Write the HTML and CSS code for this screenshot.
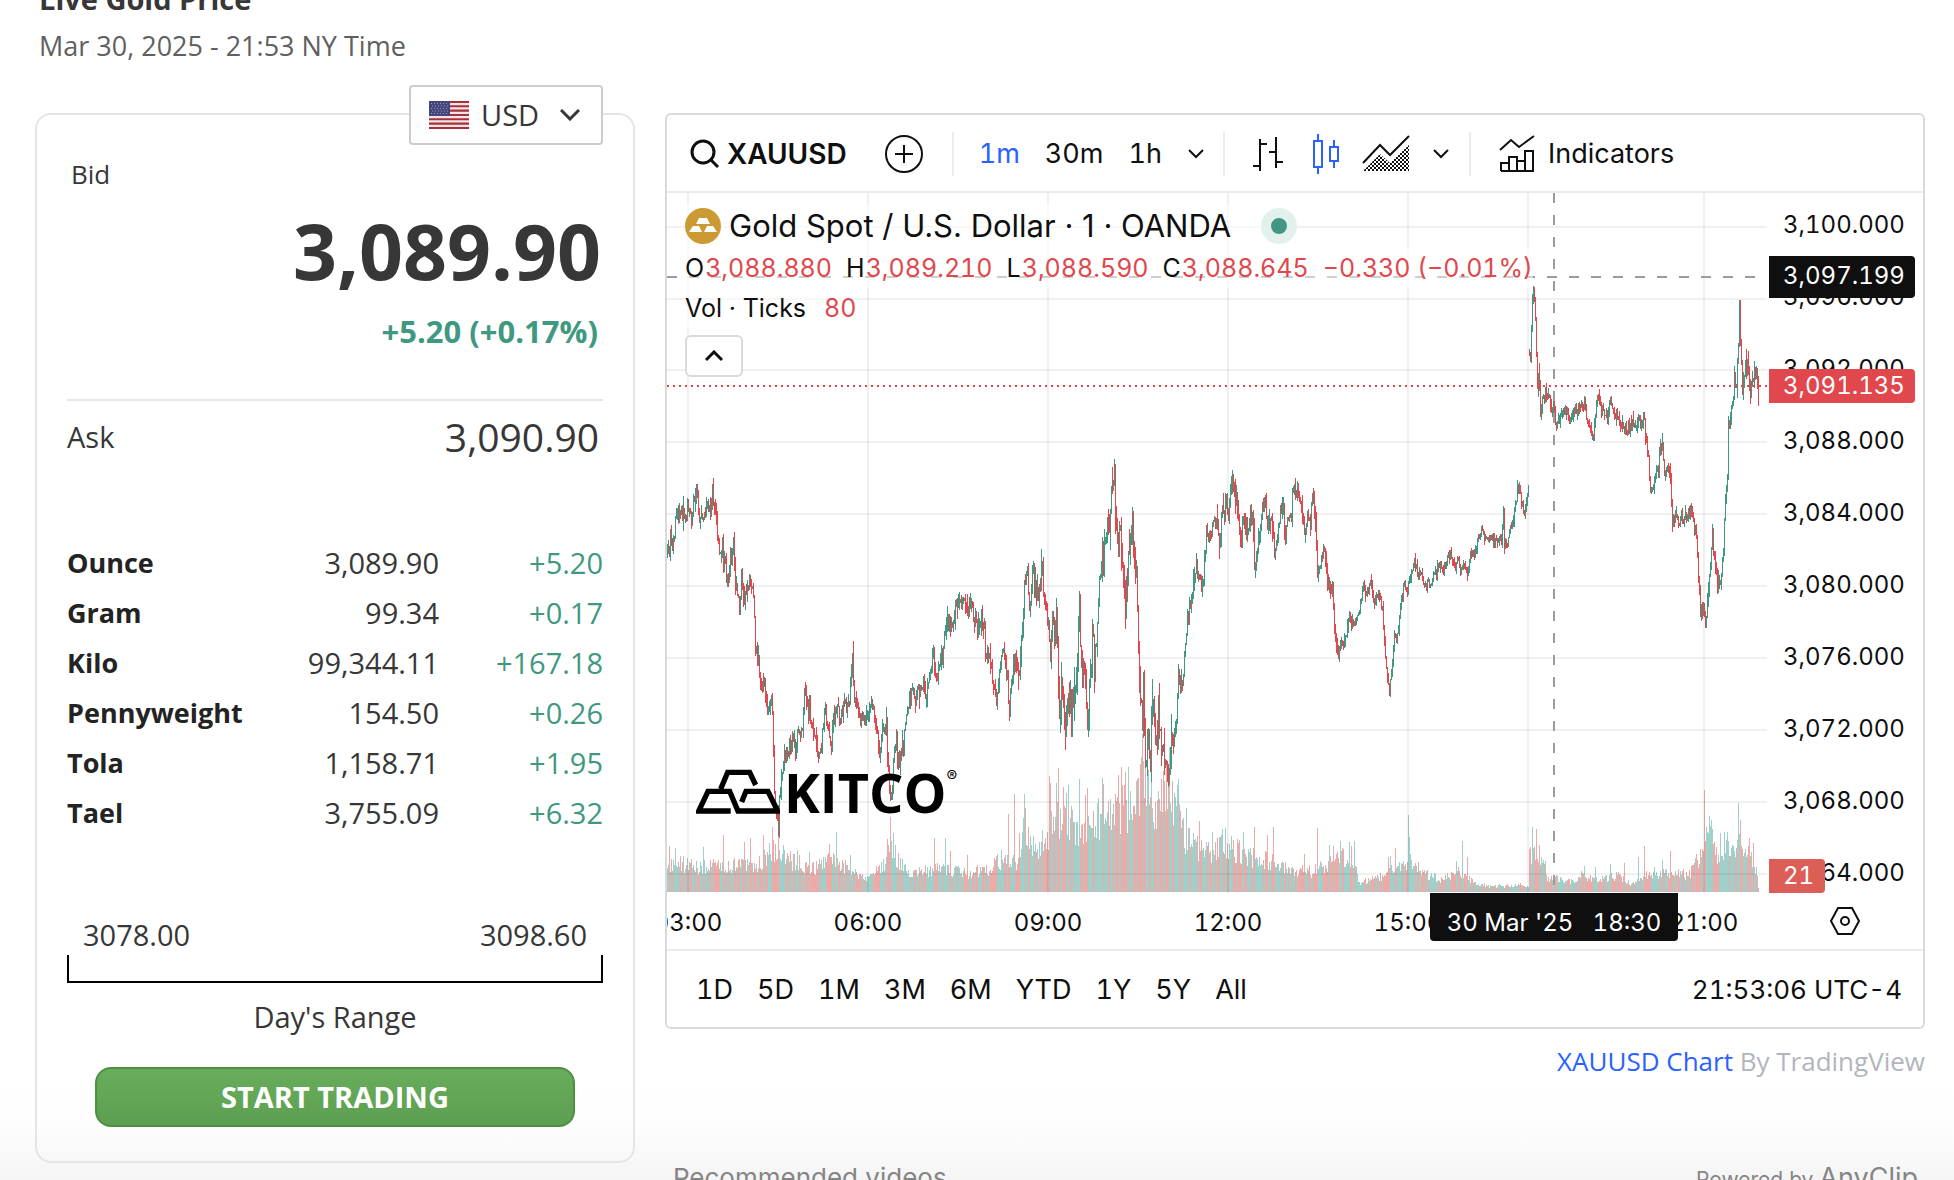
FILE: index.html
```html
<!DOCTYPE html>
<html lang="en">
<head>
  <meta charset="UTF-8" />
  <meta name="viewport" content="width=device-width, initial-scale=1.0" />
  <title>Live Gold Price</title>
  <link rel="stylesheet" href="styles.css">
</head>
<body>

  <header class="page-header">
    <h1>Live Gold Price</h1>
    <p>Mar 30, 2025 - 21:53 NY Time</p>
  </header>

  <main class="columns">
    <section class="price-card">
      <div class="currency">
        <svg class="flag" viewBox="0 0 40 28" aria-hidden="true">
          <rect width="40" height="28" fill="#f3e4e6"/>
          <path d="M0 1h40M0 5.3h40M0 9.6h40M0 14h40M0 18.3h40M0 22.6h40M0 27h40" stroke="#a8323c" stroke-width="2.1"/>
          <rect width="21" height="15" fill="#46467f"/>
          <path d="M2 2.5h18M3 5h16M2 7.5h18M3 10h16M2 12.5h18" stroke="#9a9ac0" stroke-width="1" stroke-dasharray="1 2"/>
        </svg>
        <select aria-label="Currency">
          <option>USD</option>
          <option>EUR</option>
          <option>GBP</option>
        </select>
        <svg class="currency-arrow" viewBox="0 0 20 12" aria-hidden="true"><path d="M1 1l9 9 9-9"/></svg>
      </div>

      <div class="bid-label">Bid</div>
      <div class="bid-price">3,089.90</div>
      <div class="bid-change">+5.20 (+0.17%)</div>

      <div class="ask">
        <span>Ask</span>
        <span class="ask-price">3,090.90</span>
      </div>

      <table class="units">
        <tr><th>Ounce</th><td>3,089.90</td><td class="up">+5.20</td></tr>
        <tr><th>Gram</th><td>99.34</td><td class="up">+0.17</td></tr>
        <tr><th>Kilo</th><td>99,344.11</td><td class="up">+167.18</td></tr>
        <tr><th>Pennyweight</th><td>154.50</td><td class="up">+0.26</td></tr>
        <tr><th>Tola</th><td>1,158.71</td><td class="up">+1.95</td></tr>
        <tr><th>Tael</th><td>3,755.09</td><td class="up">+6.32</td></tr>
      </table>

      <div class="range-values"><span>3078.00</span><span>3098.60</span></div>
      <div class="range-bar"></div>
      <div class="range-label">Day's Range</div>
      <button class="start-button">START TRADING</button>
    </section>

    <section class="chart-column">
      <div class="chart">
        <div class="toolbar">
          <button class="symbol">
            <svg width="30" height="30" viewBox="0 0 30 30" class="icon bold"><circle cx="13" cy="13" r="11"/><path d="M21 21l7 7"/></svg>
            XAUUSD
          </button>
          <button class="compare" aria-label="Compare">
            <svg width="40" height="40" viewBox="0 0 40 40" class="icon"><circle cx="20" cy="20" r="18"/><path d="M20 11v18M11 20h18"/></svg>
          </button>
          <span class="separator"></span>
          <div class="intervals">
            <button class="active">1m</button>
            <button>30m</button>
            <button>1h</button>
            <button aria-label="More intervals"><svg width="18" height="10" viewBox="0 0 18 10" class="icon"><path d="M2 1l7 7 7-7"/></svg></button>
          </div>
          <span class="separator"></span>
          <div class="styles">
            <button aria-label="Bars"><svg width="38" height="40" viewBox="0 0 38 40" class="icon"><path d="M8 5v32M1 32h7M8 10h7M24 3v31M17 18h7M24 28h7"/></svg></button>
            <button class="active" aria-label="Candles"><svg width="28" height="40" viewBox="0 0 28 40" class="icon"><path d="M6 0v6M6 34v6M22 6v6M22 28v6M2 7h8v26h-8zM18 13h8v14h-8z"/></svg></button>
            <button aria-label="Area">
              <svg width="48" height="38" viewBox="0 0 48 38" class="icon">
                <defs><pattern id="dots" width="4" height="4" patternUnits="userSpaceOnUse"><path d="M0 0h2v2h-2zM2 2h2v2h-2z" fill="#0f0f0f" stroke="none"/></pattern></defs>
                <path d="M1 36l17-17 10 9 19-18v26z" fill="url(#dots)" stroke="none"/>
                <path d="M1 28l17-18 10 10 19-19"/>
              </svg>
            </button>
            <button aria-label="More styles"><svg width="18" height="10" viewBox="0 0 18 10" class="icon"><path d="M2 1l7 7 7-7"/></svg></button>
          </div>
          <span class="separator"></span>
          <button class="indicators">
            <svg width="36" height="38" viewBox="0 0 36 38" class="icon"><path d="M1 15l11-10 8 7 15-11M2 36h32V16h-8v20M2 36v-8h8v8M10 36V22h8v14M18 26h8"/></svg>
            Indicators
          </button>
        </div>

        <div class="chart-body">
          <div class="pane">
            <svg id="plot" viewBox="0 0 1100 700" preserveAspectRatio="none" shape-rendering="crispEdges">
              <path id="vol-up" class="vol-up"/>
              <path id="vol-down" class="vol-down"/>
              <path class="grid-line" d="M0 34h1100M0 106h1100M0 177h1100M0 249h1100M0 321h1100M0 393h1100M0 465h1100M0 537h1100M0 609h1100M0 681h1100"/>
              <path class="grid-line" d="M21 0v700M201 0v700M381 0v700M561 0v700M741 0v700M861 0v700M1037 0v700"/>
              <path id="bar-up" class="bar-up"/>
              <path id="bar-down" class="bar-down"/>
              <path class="last-price" d="M0 193h1100"/>
              <path class="crosshair" d="M0 84h1100"/>
              <path class="crosshair" d="M887 0v700"/>
            </svg>

            <div class="legend">
              <div class="legend-title">
                <svg width="36" height="36" viewBox="0 0 36 36"><circle cx="18" cy="18" r="18" fill="#cc9a33"/><path d="M14 10h8l3 6h-14zM8 18h6l3 6h-13zM22 18h6l4 6h-13z" fill="#fff"/></svg>
                <span>Gold Spot / U.S. Dollar · 1 · OANDA</span>
                <i class="market-open"></i>
              </div>
              <div class="legend-values">
                <span>O<b>3,088.880</b></span>
                <span>H<b>3,089.210</b></span>
                <span>L<b>3,088.590</b></span>
                <span>C<b>3,088.645</b></span>
                <b>−0.330 (−0.01%)</b>
              </div>
              <div class="legend-volume">Vol · Ticks <b>80</b></div>
              <button class="collapse" aria-label="Hide legend"><svg width="18" height="12" viewBox="0 0 18 12" class="icon bold"><path d="M1 10l8-8 8 8"/></svg></button>
            </div>

            <div class="logo">
              <svg width="84" height="46" viewBox="0 0 252 138" aria-hidden="true">
                <path d="M74 63L95 13h66l18 38M104 129H8l28-59h65l25 59h119l-29-59h-66l-13 32" fill="none" stroke="#000" stroke-width="16"/>
              </svg>
              <span>KITCO</span><sup>®</sup>
            </div>
          </div>

          <div class="price-axis">
            <ul>
              <li>3,100.000</li>
              <li>3,096.000</li>
              <li>3,092.000</li>
              <li>3,088.000</li>
              <li>3,084.000</li>
              <li>3,080.000</li>
              <li>3,076.000</li>
              <li>3,072.000</li>
              <li>3,068.000</li>
              <li>3,064.000</li>
            </ul>
            <span class="price-tag cursor">3,097.199</span>
            <span class="price-tag last">3,091.135</span>
            <span class="price-tag volume">21</span>
          </div>

          <div class="time-axis">
            <span style="left: 1.91%">03:00</span>
            <span style="left: 18.27%">06:00</span>
            <span style="left: 34.64%">09:00</span>
            <span style="left: 51%">12:00</span>
            <span style="left: 67.36%">15:00</span>
            <span style="left: 94.27%">21:00</span>
            <span class="time-tag" style="left: 80.64%">30 Mar '25 &nbsp; 18:30</span>
          </div>
          <button class="axis-settings" aria-label="Settings">
            <svg width="30" height="28" viewBox="0 0 30 28" class="icon"><path d="M8 1h14l7 13-7 13H8L1 14z"/><circle cx="15" cy="14" r="4"/></svg>
          </button>
        </div>

        <div class="chart-footer">
          <div class="ranges">
            <button>1D</button>
            <button>5D</button>
            <button>1M</button>
            <button>3M</button>
            <button>6M</button>
            <button>YTD</button>
            <button>1Y</button>
            <button>5Y</button>
            <button>All</button>
          </div>
          <span class="clock">21:53:06 UTC-4</span>
        </div>
      </div>

      <p class="attribution"><a href="#">XAUUSD Chart</a> By TradingView</p>
      <div class="videos">
        <span>Recommended videos</span>
        <span class="powered">Powered by <em>AnyClip</em></span>
      </div>
    </section>
  </main>

  <script src="chart.js"></script>
</body>
</html>
```
FILE: styles.css
```css
* { margin: 0; padding: 0; box-sizing: border-box; }

body {
  height: 100vh;
  overflow: hidden;
  padding: 0 29px 0 35px;
  background: linear-gradient(to top, #f5f5f5, #fefefe 60px, #fff 100px);
  font-family: "Open Sans", "Noto Sans", sans-serif;
  font-size: 26px;
  line-height: 36px;
  color: #373737;
}

button {
  font: inherit;
  color: inherit;
  background: none;
  border: 0;
  cursor: pointer;
}

.page-header { padding-left: 4px; }
.page-header h1 { margin-top: -19px; font-size: 29px; line-height: 36px; }
.page-header p { margin-top: 11px; font-size: 27px; color: #606060; }

.columns {
  display: flex;
  align-items: flex-start;
  gap: 30px;
  margin-top: 49px;
}

/* price card */
.price-card {
  position: relative;
  width: 600px;
  flex-shrink: 0;
  padding: 41px 30px 34px;
  border: 2px solid #e5e5e5;
  border-radius: 16px;
}

.currency {
  position: absolute;
  top: -30px;
  right: 30px;
  width: 194px;
  height: 60px;
}
.currency select {
  appearance: none;
  width: 100%;
  height: 100%;
  padding: 0 0 0 70px;
  font: inherit;
  font-size: 29px;
  color: #373737;
  background: #fff;
  border: 2px solid #ccc;
  border-radius: 4px;
}
.flag, .currency-arrow { position: absolute; pointer-events: none; }
.flag { left: 20px; top: 16px; width: 40px; height: 28px; }
.currency-arrow { right: 23px; top: 24px; width: 20px; height: 12px; fill: none; stroke: #373737; stroke-width: 3; }

.bid-label { padding-left: 4px; }
.bid-price {
  margin-top: 13px;
  font-size: 77px;
  line-height: 92px;
  font-weight: bold;
  text-align: right;
  padding-right: 2px;
}
.bid-change {
  margin-top: 16px;
  padding: 0 5px 50px;
  font-size: 31px;
  font-weight: bold;
  text-align: right;
  color: #3f9880;
}
.ask {
  display: flex;
  justify-content: space-between;
  align-items: center;
  padding: 10px 4px 10px 0;
  border-top: 2px solid #e5e5e5;
  font-size: 29px;
}
.ask-price { font-size: 39px; line-height: 52px; }

.units {
  width: 100%;
  margin-top: 65px;
  border-collapse: collapse;
  table-layout: fixed;
  font-size: 29px;
}
.units tr { height: 50px; }
.units th { width: 36%; font-size: 27px; text-align: left; color: #232323; }
.units td { text-align: right; }
.units .up { width: 164px; color: #3f9880; }

.range-values {
  display: flex;
  justify-content: space-between;
  margin-top: 79px;
  padding: 0 16px;
  font-size: 29px;
}
.range-bar {
  height: 28px;
  margin-top: 2px;
  border: 2px solid #000;
  border-top: 0;
}
.range-label { margin-top: 16px; font-size: 29px; text-align: center; }
.start-button {
  display: block;
  width: 480px;
  height: 60px;
  margin: 32px auto 0;
  border: 2px solid #4f8f45;
  border-radius: 16px;
  background: linear-gradient(#67ad5b, #5d9f51);
  color: #fff;
  font-weight: bold;
  font-size: 29px;
}

/* chart widget */
.chart-column { flex: 1; min-width: 0; }
.chart {
  border: 2px solid #dadada;
  border-radius: 6px;
  font-family: Inter, sans-serif;
  font-size: 27px;
  font-variant-numeric: tabular-nums;
  color: #0f0f0f;
}
.icon { display: block; fill: none; stroke: currentColor; stroke-width: 2; }
.icon.bold { stroke-width: 3; }
.active { color: #2962ff; }

.toolbar {
  display: flex;
  align-items: center;
  height: 78px;
  padding: 2px 0 0 23px;
  border-bottom: 2px solid #ebebeb;
}
.symbol, .indicators, .intervals, .styles { display: flex; align-items: center; }
.symbol { gap: 7px; font-size: 28px; font-weight: 600; }
.compare { margin: 0 28px 0 37px; }
.separator { width: 2px; height: 44px; background: #ebebeb; }
.intervals { gap: 25px; padding: 0 18px 0 25px; }
.styles { gap: 22px; padding: 0 19px 0 27px; }
.indicators { gap: 13px; padding-left: 28px; }

.chart-body {
  display: grid;
  grid-template-columns: 1fr 156px;
  grid-template-rows: 700px 56px;
}
.pane { position: relative; min-width: 0; }
.pane > svg { display: block; width: 100%; height: 100%; }
.vol-up { stroke: #a0d0ca; }
.vol-down { stroke: #ecaaa8; }
.bar-up { stroke: #429782; }
.bar-down { stroke: #e0484d; }
.grid-line { stroke: rgba(0, 0, 0, .06); stroke-width: 2; }
.last-price { stroke: #e0484d; stroke-width: 2; stroke-dasharray: 2 4; }
.crosshair { stroke: #9c9c9c; stroke-width: 2; stroke-dasharray: 10 12; }

.legend {
  position: absolute;
  top: 11px;
  left: 18px;
  font-size: 25px;
}
.legend b { font-weight: normal; color: #e0484d; }
.legend-title, .legend-values, .legend-volume {
  display: flex;
  width: max-content;
  background: rgba(255, 255, 255, .5);
}
.legend-title {
  align-items: center;
  gap: 8px;
  height: 44px;
  font-size: 31px;
  font-variant-numeric: normal;
}
.market-open {
  width: 36px;
  height: 36px;
  margin-left: 22px;
  border: 10px solid #e3f1ee;
  border-radius: 50%;
  background: #429782;
}
.legend-values { gap: 14px; height: 40px; line-height: 40px; }
.legend-values span b { margin-left: 1px; }
.legend-volume { gap: 18px; height: 40px; line-height: 40px; }
.collapse {
  display: grid;
  place-items: center;
  width: 58px;
  height: 42px;
  margin-top: 7px;
  background: #fff;
  border: 2px solid #dadada;
  border-radius: 6px;
}

.logo {
  position: absolute;
  left: 29px;
  bottom: 79px;
  display: flex;
  align-items: flex-end;
  color: #000;
}
.logo span { margin-left: 4px; font: bold 54px/44px "Open Sans", sans-serif; }
.logo sup { align-self: flex-start; font-size: 16px; line-height: 16px; }

.price-axis { position: relative; font-size: 24px; overflow: hidden; }
.price-axis ul { margin-top: -4px; list-style: none; }
.price-axis li { height: 72px; padding-left: 16px; line-height: 72px; }
.price-tag {
  position: absolute;
  left: 2px;
  width: 146px;
  height: 34px;
  padding-left: 14px;
  line-height: 34px;
  color: #fff;
  border-radius: 0 4px 4px 0;
}
.cursor { top: 63px; height: 42px; line-height: 40px; background: #0f0f0f; }
.last { top: 176px; background: #e0484d; }
.volume { top: 666px; width: 56px; background: #dd5e57; }

.time-axis { position: relative; overflow: hidden; font-size: 24px; }
.time-axis span { position: absolute; transform: translateX(-50%); line-height: 60px; white-space: nowrap; }
.time-axis .time-tag {
  width: 248px;
  height: 48px;
  text-align: center;
  color: #fff;
  background: #0f0f0f;
  border-radius: 0 0 4px 4px;
}
.axis-settings { justify-self: center; }

.chart-footer {
  display: flex;
  justify-content: space-between;
  align-items: center;
  height: 78px;
  padding: 2px 21px 0 29px;
  border-top: 2px solid #ebebeb;
}
.ranges { display: flex; gap: 24px; }
.clock { font-size: 26px; }

.attribution { margin-top: 14px; text-align: right; color: #b2b5be; }
.attribution a { color: #2962ff; text-decoration: none; }

.videos {
  display: flex;
  justify-content: space-between;
  align-items: baseline;
  margin-top: 81px;
  padding: 0 7px 0 8px;
  font-family: Inter, sans-serif;
  color: #858585;
}
.powered { font-size: 21px; }
.powered em { font-size: 27px; font-style: normal; }
```
FILE: chart.js
```js
// one-minute series, [minute, y] pairs inside the 1100x700 pane
const price = [
  [0,362],[3,347],[6,347],[9,319],[15,319],[18,322],[25,317],[29,290],[32,329],[34,315],[36,330],[40,315],[43,315],[45,297],[48,317],[50,344],[52,355],[55,350],[56,377],[57,364],[59,384],[62,380],[64,364],[66,350],[68,390],[72,414],[74,384],[77,404],[80,400],[82,380],[86,397],[88,460],[91,460],[93,487],[96,490],[98,497],
  [100,520],[104,500],[105,524],[107,594],[110,624],[111,634],[112,597],[117,567],[120,557],[125,547],[128,557],[130,545],[135,534],[137,500],[140,517],[142,514],[144,530],[147,544],[151,564],[154,557],[155,537],[158,510],[160,537],[164,544],[166,527],[169,510],[170,507],[172,530],[176,514],[180,507],[182,504],[185,467],[187,500],[190,514],[193,529],[197,524],
  [202,517],[204,500],[206,520],[210,544],[212,560],[214,544],[219,532],[220,567],[223,610],[225,594],[226,564],[229,547],[231,569],[234,554],[236,560],[238,527],[242,507],[245,497],[248,502],[254,494],[258,504],[261,487],[264,470],[266,460],[269,484],[272,469],[275,464],[278,434],[281,427],[284,437],[288,417],[293,414],[297,402],
  [300,417],[304,410],[307,430],[310,434],[314,424],[317,434],[318,457],[323,470],[326,490],[329,502],[331,490],[335,457],[338,470],[340,484],[342,517],[346,467],[350,464],[352,477],[355,440],[357,384],[360,387],[363,407],[366,380],[369,404],[372,404],[375,370],[377,410],[381,427],[383,467],[384,427],[388,440],[389,414],[392,510],[394,480],[397,530],[399,530],
  [402,497],[404,524],[407,500],[410,457],[412,417],[415,494],[417,460],[420,534],[423,480],[425,434],[427,474],[430,427],[432,390],[435,350],[437,360],[440,327],[442,327],[445,294],[447,284],[450,334],[451,364],[452,330],[455,377],[458,410],[461,370],[463,354],[465,327],[467,364],[469,390],[471,464],[475,530],[476,497],[478,580],[481,540],[483,574],[484,514],[486,494],[488,547],[490,560],[491,510],[494,554],[496,550],[499,580],
  [502,587],[504,537],[506,544],[509,524],[511,480],[513,500],[516,477],[519,437],[522,417],[526,387],[529,375],[532,384],[535,400],[538,350],[540,337],[545,337],[547,319],[548,335],[550,334],[552,344],[555,320],[559,300],[561,329],[565,284],[569,307],[571,327],[573,355],[576,327],[579,334],[584,322],[586,330],[587,377],[590,357],[594,320],[597,312],
  [600,337],[604,320],[607,362],[610,334],[614,312],[616,320],[618,344],[621,320],[624,325],[625,300],[630,294],[632,297],[634,317],[638,342],[640,325],[643,325],[645,300],[648,334],[650,377],[652,380],[656,357],[659,372],[661,390],[665,400],[667,434],[669,454],[671,457],[673,444],[675,455],[678,444],[682,424],[685,434],[690,424],[694,410],[696,394],[698,404],
  [703,390],[707,410],[711,400],[715,417],[718,467],[722,499],[725,467],[727,447],[729,447],[731,434],[734,407],[737,390],[740,397],[743,384],[747,370],[750,377],[753,380],[757,392],[763,390],[768,380],[773,370],[775,380],[779,367],[782,362],[788,377],[790,364],[793,377],[796,369],
  [800,379],[803,360],[807,362],[810,347],[814,337],[817,345],[823,344],[830,347],[834,344],[835,334],[836,314],[837,350],[840,350],[843,335],[846,324],[849,310],[850,290],[852,294],[854,310],[857,319],[860,300],[861,294],[862,162],[863,167],[864,130],[866,92],[868,127],[870,187],[871,177],[873,217],[875,210],[879,197],[881,200],[884,214],[886,207],[888,230],[891,230],[894,214],[899,217],
  [902,224],[906,217],[913,214],[918,210],[920,230],[925,244],[927,234],[930,204],[933,212],[938,224],[941,219],[943,205],[946,220],[952,230],[956,237],[961,235],[966,230],[973,230],[977,222],[978,240],[981,267],[983,297],[986,290],[989,274],[991,277],[993,254],[995,254],[997,277],
  [1000,275],[1003,287],[1005,327],[1009,320],[1011,330],[1015,325],[1020,324],[1023,317],[1026,330],[1029,340],[1031,377],[1033,424],[1036,407],[1038,430],[1040,407],[1043,364],[1045,337],[1048,377],[1050,387],[1053,387],[1056,354],[1058,300],[1060,287],[1061,237],[1064,214],[1066,207],[1067,187],[1069,197],[1071,147],[1072,124],[1073,154],[1075,194],[1077,180],[1080,170],[1082,190],[1085,177],[1086,187],[1088,170],[1091,190]
];

// how far a bar reaches past its open and close
const spread = [[0,14],[330,15],[370,26],[460,30],[505,24],[525,18],[660,15],[700,9],[800,8],[858,9],[870,16],[885,11],[1025,12],[1035,20],[1060,12],[1070,24],[1091,22]];

const volume = [
  [0,25],[10,32],[30,25],[60,28],[90,28],[105,45],[112,45],[125,32],[150,25],[165,35],[175,28],[198,13],[215,25],[222,50],[232,30],[245,18],[270,25],[300,20],[320,24],[340,38],[350,28],[357,65],[375,42],[385,70],[395,75],[410,70],[430,75],[445,75],[455,90],[465,80],[472,115],[480,120],[490,80],[500,110],[510,75],[520,55],[535,42],
  [560,48],[580,38],[600,33],[625,22],[645,22],[665,33],[685,38],[692,10],[710,14],[725,22],[742,35],[755,20],[775,12],[790,22],[805,12],[815,7],[835,6],[855,7],[861,7],[862,38],[872,38],[880,15],[905,11],[915,18],[930,12],[950,18],[965,8],[980,20],[1000,19],[1022,18],[1028,35],[1034,35],[1040,60],[1045,60],[1050,42],[1060,45],[1070,52],[1075,50],[1082,38],[1089,25],[1091,4]
];

const spikes = {
  2:46, 8:44, 36:45, 56:57, 77:50, 83:54, 96:57, 105:65, 111:56, 130:42, 142:40, 162:48, 169:60, 183:37, 221:47, 223:75, 226:59, 267:54, 278:54, 283:41, 300:37, 341:78, 347:98, 352:59, 357:98, 358:84, 375:62, 382:116, 383:109, 389:109, 391:124, 396:105, 399:99, 401:107, 412:113, 418:97, 420:104,
  435:114, 436:108, 451:117, 454:125, 458:120, 461:125, 475:158, 478:152, 484:118, 496:121, 502:145, 510:107, 511:113, 519:84, 532:71, 545:60, 555:63, 558:64, 576:60, 587:65, 600:57, 606:65, 637:38, 650:64, 662:47, 666:46, 673:51, 682:50, 687:51, 721:35, 723:36, 728:44, 741:77, 742:55, 789:31, 795:51, 800:35,
  865:65, 869:63, 878:31, 917:26, 928:25, 943:28, 957:29, 971:35, 977:46, 995:32, 1003:41, 1037:102, 1042:76, 1044:72, 1053:59, 1057:60, 1060:60, 1071:89, 1073:72, 1082:54, 1086:49
};

let seed = 7;
function rand() {
  seed = (seed * 16807) % 2147483647;
  return seed / 2147483647;
}

function at(points, x) {
  let i = 1;
  while (i < points.length - 1 && points[i][0] < x) i++;
  const [x0, y0] = points[i - 1];
  const [x1, y1] = points[i];
  return y0 + (y1 - y0) * Math.min(1, (x - x0) / (x1 - x0));
}

const d = { barUp: "", barDown: "", volUp: "", volDown: "" };
let open = price[0][1];

for (let x = 0; x <= 1091; x++) {
  const s = at(spread, x);
  const close = at(price, x) + (rand() - 0.5) * s;
  if (x === 862) open = close;
  const up = close < open;
  const top = Math.round(Math.min(open, close) - rand() * rand() * s);
  const bottom = Math.round(Math.max(open, close) + rand() * rand() * s) + 1;
  d[up ? "barUp" : "barDown"] += `M${x + 0.5} ${top}V${bottom}`;

  const h = Math.round(spikes[x] || at(volume, x) * (0.65 + rand() * 0.6));
  d[up ? "volUp" : "volDown"] += `M${x + 0.5} 699v${-h}`;
  open = close;
}

document.getElementById("bar-up").setAttribute("d", d.barUp);
document.getElementById("bar-down").setAttribute("d", d.barDown);
document.getElementById("vol-up").setAttribute("d", d.volUp);
document.getElementById("vol-down").setAttribute("d", d.volDown);
```
